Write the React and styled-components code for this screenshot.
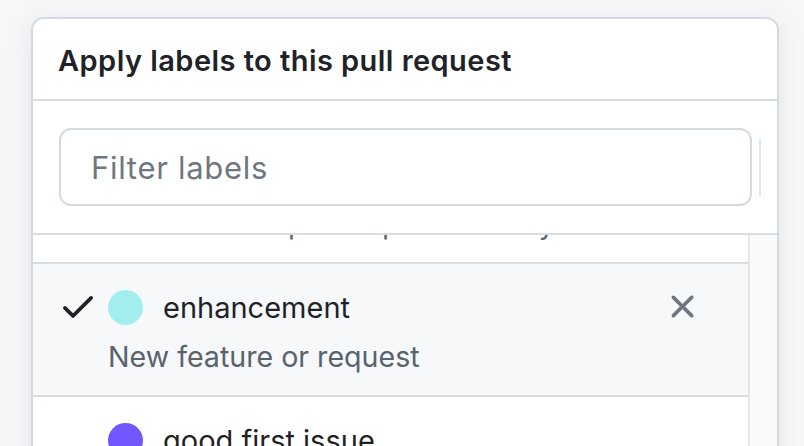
import styled, { createGlobalStyle } from "styled-components";

const GlobalStyle = createGlobalStyle`
  body {
    margin: 0;
    background: #f6f7f8;
    overflow: hidden;
    font-family: Inter, "Noto Sans", sans-serif;
  }
`;

const labels = [
  { name: "duplicate", color: "#cfd3d7", description: "This issue or pull request already exists" },
  { name: "enhancement", color: "#a2eeef", description: "New feature or request", selected: true },
  { name: "good first issue", color: "#7057ff", description: "Good for newcomers" },
];

function CheckIcon() {
  return (
    <svg width="40" height="40" viewBox="0 0 16 16" fill="#1f2328">
      <path d="M13.78 4.22a.75.75 0 0 1 0 1.06l-7.25 7.25a.75.75 0 0 1-1.06 0L2.22 9.28a.751.751 0 0 1 .018-1.042.751.751 0 0 1 1.042-.018L6 10.94l6.72-6.72a.75.75 0 0 1 1.06 0Z" />
    </svg>
  );
}

function XIcon() {
  return (
    <svg width="39" height="39" viewBox="0 0 16 16" fill="#6e7781">
      <path d="M3.72 3.72a.75.75 0 0 1 1.06 0L8 6.94l3.22-3.22a.749.749 0 0 1 1.275.326.749.749 0 0 1-.215.734L9.06 8l3.22 3.22a.749.749 0 0 1-.326 1.275.749.749 0 0 1-.734-.215L8 9.06l-3.22 3.22a.751.751 0 0 1-1.042-.018.751.751 0 0 1-.018-1.042L6.94 8 3.72 4.78a.75.75 0 0 1 0-1.06Z" />
    </svg>
  );
}

function App() {
  return (
    <>
      <GlobalStyle />
      <Card>
        <Header>
          <Title>Apply labels to this pull request</Title>
        </Header>
        <FilterBar>
          <FilterInput placeholder="Filter labels" />
          <FocusLine />
        </FilterBar>
        <ListArea>
          <Items>
            <Scrolled>
              {labels.map((l) => (
                <Item key={l.name} $selected={l.selected}>
                  <CheckSlot>{l.selected && <CheckIcon />}</CheckSlot>
                  <Dot $color={l.color} />
                  <Name>{l.name}</Name>
                  <RemoveSlot>{l.selected && <XIcon />}</RemoveSlot>
                  <Description>{l.description}</Description>
                </Item>
              ))}
            </Scrolled>
          </Items>
          <Track />
        </ListArea>
      </Card>
    </>
  );
}

const Card = styled.div`
  margin: 17px 0 0 31px;
  width: 748px;
  box-sizing: border-box;
  height: 460px;
  background: #fff;
  border: 2px solid #d5dae0;
  border-bottom: none;
  border-radius: 13px 13px 0 0;
  box-shadow: 0 6px 24px rgba(140, 149, 159, 0.18);
  overflow: hidden;
`;

const Header = styled.div`
  height: 80px;
  display: flex;
  align-items: center;
  padding-left: 25px;
  border-bottom: 2px solid #d8dde2;
`;

const Title = styled.h1`
  margin: 2px 0 0;
  font-size: 29px;
  font-weight: 600;
  color: #1f2328;
  letter-spacing: 0.45px;
`;

const FilterBar = styled.div`
  display: flex;
  align-items: center;
  gap: 7px;
  padding: 27px 16px 27px 26px;
  border-bottom: 2px solid #d8dde2;
`;

const FilterInput = styled.input`
  flex: 1;
  height: 78px;
  box-sizing: border-box;
  border: 2px solid #d5dae0;
  border-radius: 12px;
  padding: 0 0 0 30px;
  font-family: Inter, "Noto Sans", sans-serif;
  font-size: 31px;
  letter-spacing: 0.7px;
  color: #1f2328;
  outline: none;
  &::placeholder {
    color: #6e7781;
  }
`;

const FocusLine = styled.div`
  width: 2px;
  height: 58px;
  background: #dde8f5;
`;

const ListArea = styled.div`
  display: flex;
  height: 240px;
`;

const Items = styled.div`
  flex: 1;
  overflow: hidden;
`;

const Scrolled = styled.div`
  margin-top: -104px;
`;

const Item = styled.div`
  display: grid;
  grid-template-columns: 50px 55px 1fr auto;
  grid-template-rows: 36px 36px;
  row-gap: 13px;
  padding: 26px 46px 20px 25px;
  background: ${(p) => (p.$selected ? "#f6f8fa" : "#fff")};
  border-bottom: 2px solid #d8dde2;
`;

const CheckSlot = styled.div`
  grid-column: 1;
  grid-row: 1;
  margin-top: -4px;
`;

const Dot = styled.span`
  grid-column: 2;
  grid-row: 1;
  width: 35px;
  height: 35px;
  border-radius: 50%;
  background: ${(p) => p.$color};
`;

const Name = styled.div`
  grid-column: 3;
  grid-row: 1;
  font-size: 29px;
  line-height: 36px;
  color: #1f2328;
`;

const RemoveSlot = styled.div`
  grid-column: 4;
  grid-row: 1;
  margin-top: -3px;
`;

const Description = styled.div`
  grid-column: 2 / 5;
  grid-row: 2;
  font-size: 28.6px;
  line-height: 36px;
  color: #59636e;
`;

const Track = styled.div`
  width: 27px;
  background: #fafafa;
  border-left: 2px solid #e6e6e6;
`;

export default App;
